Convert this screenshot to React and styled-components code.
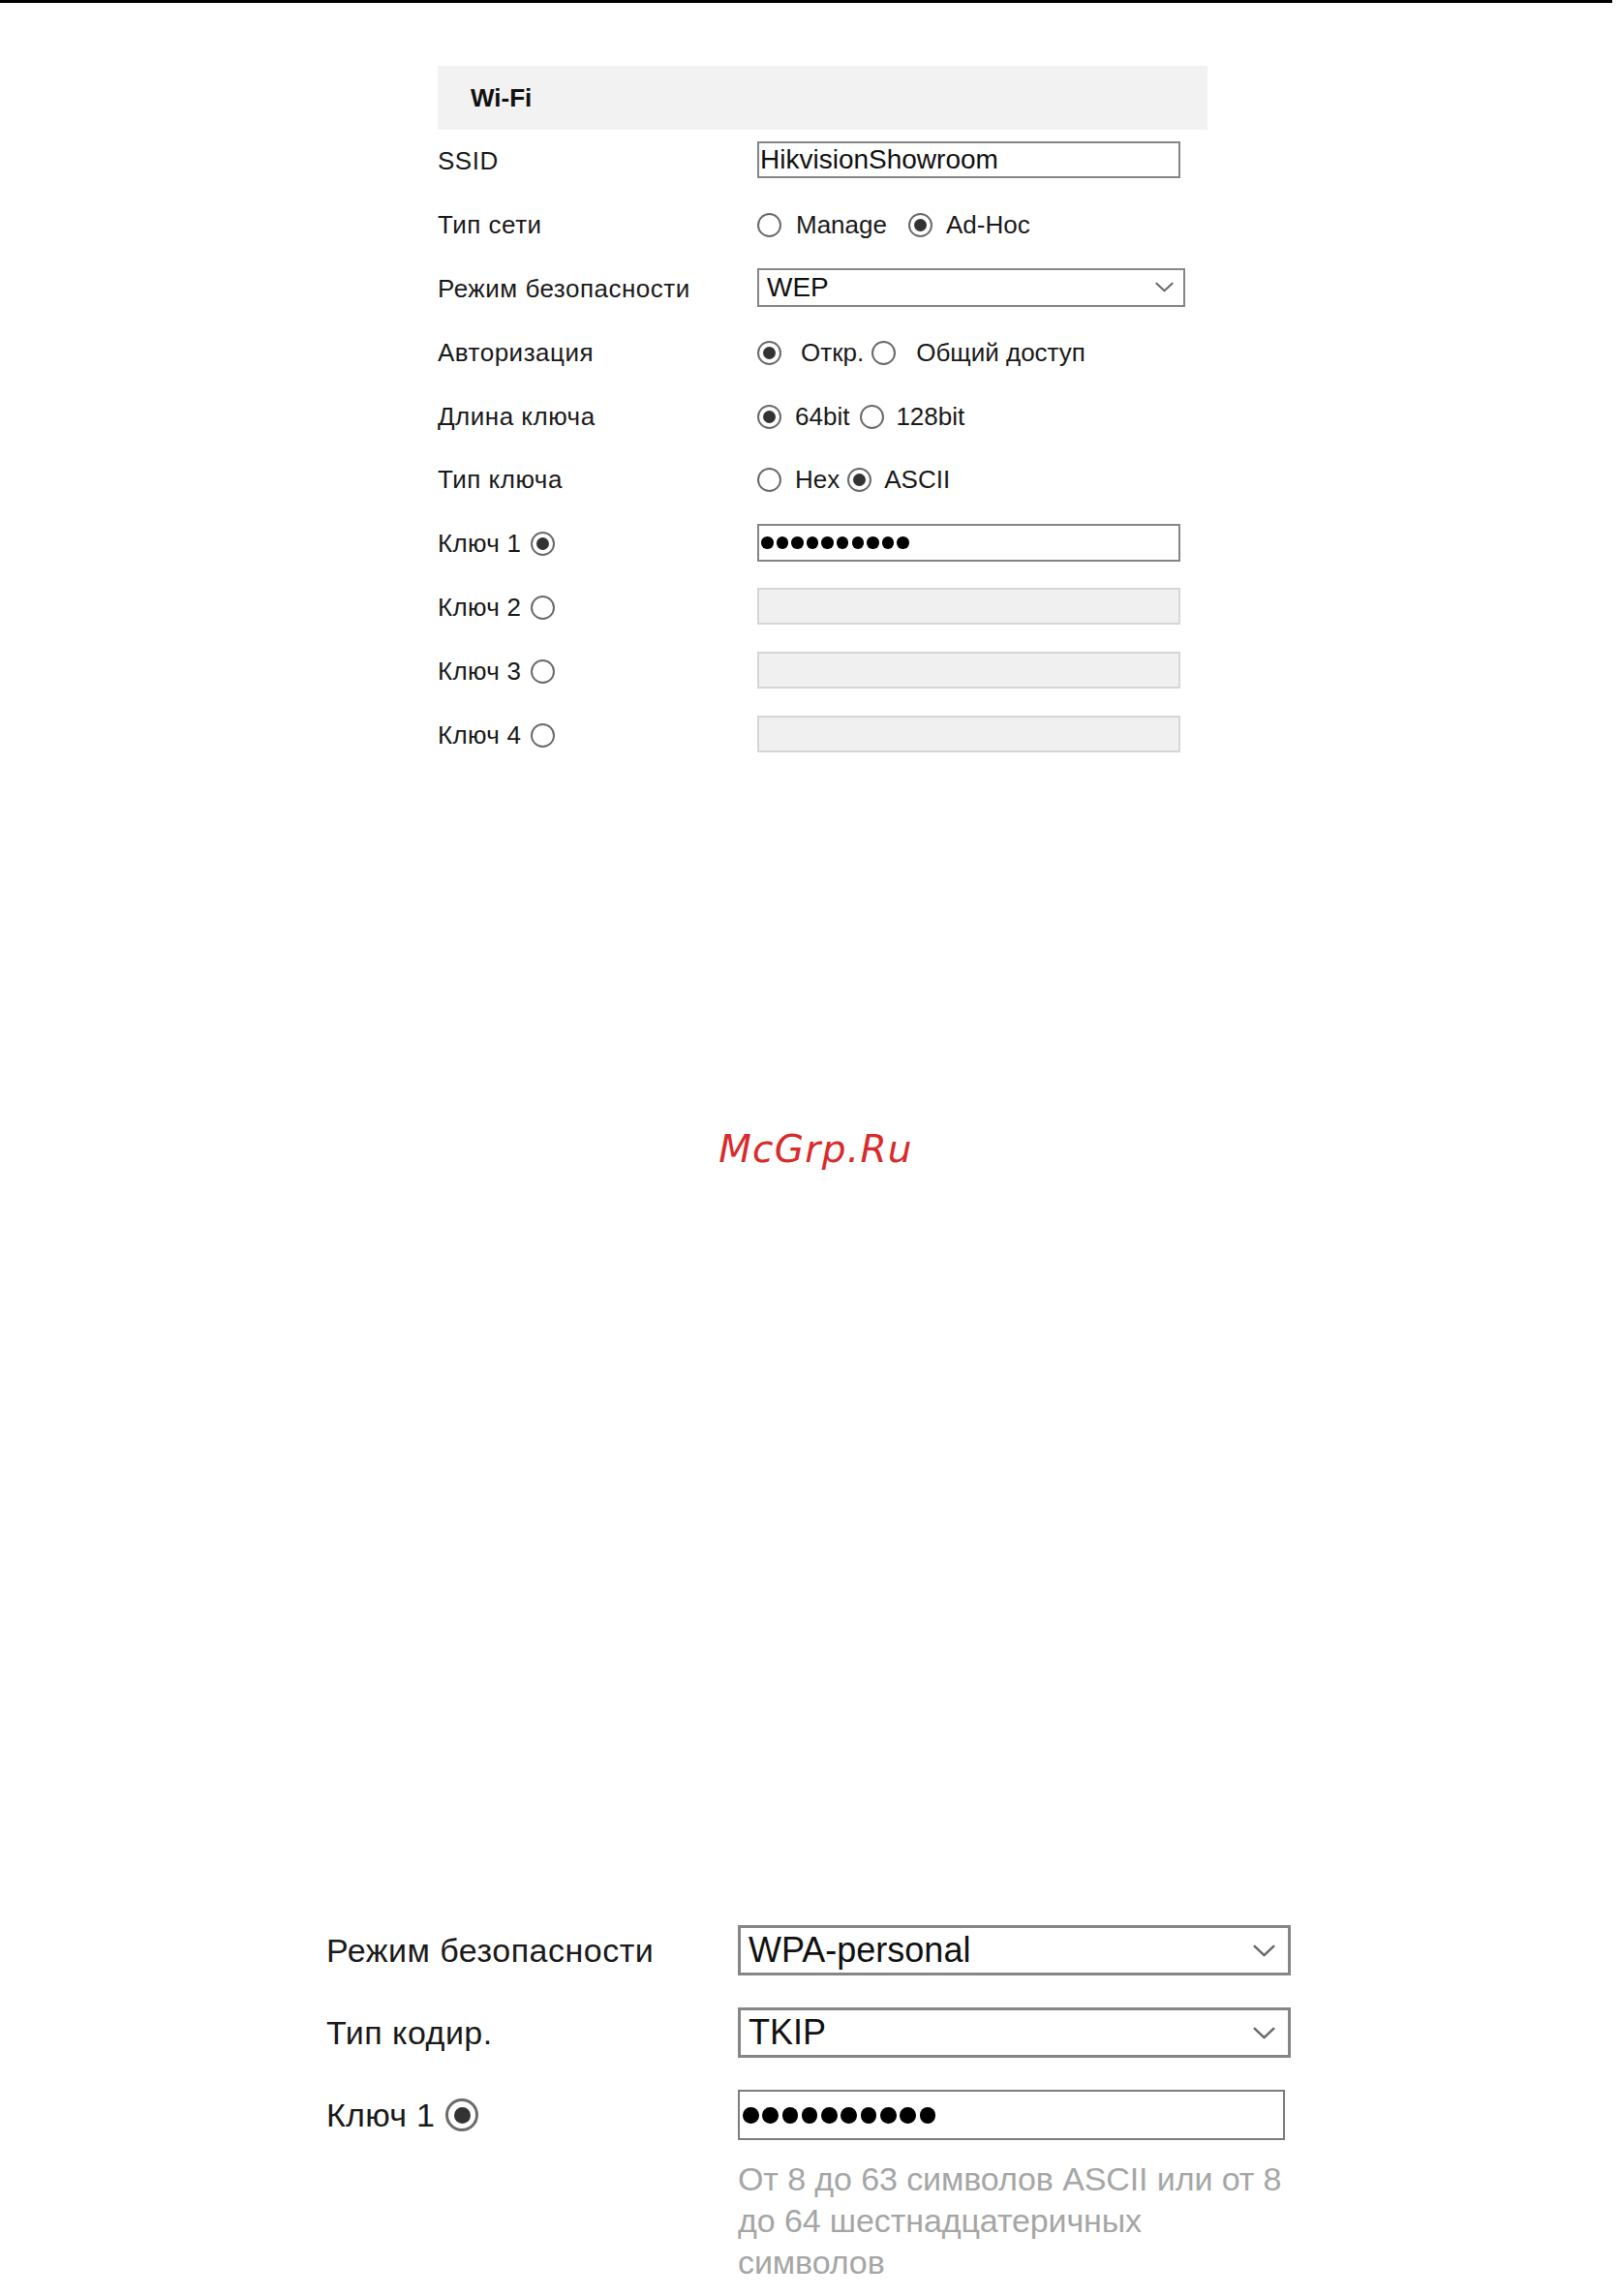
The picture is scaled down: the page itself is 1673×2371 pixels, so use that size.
import React from "react";
import styled, { createGlobalStyle } from "styled-components";

const GlobalStyle = createGlobalStyle`
  html, body { margin: 0; padding: 0; background: #ffffff; }
  body {
    font-family: "Liberation Sans", Arial, sans-serif;
    color: #1a1a1a;
  }
  * { box-sizing: border-box; }
`;

const Page = styled.div`
  width: 1673px;
  min-height: 2371px;
  background: #fff;
`;

const TopRule = styled.div`
  width: 1665px;
  height: 3px;
  background: #000;
`;

const WifiPanel = styled.section`
  margin: 65px 0 0 452px;
  width: 795px;
`;

const PanelHeader = styled.div`
  height: 66px;
  background: #f2f2f2;
  padding-left: 34px;
  display: flex;
  align-items: center;
  font-size: 26px;
  font-weight: bold;
  color: #111;
`;

const FormRow = styled.div`
  display: grid;
  grid-template-columns: ${(p) => p.$labelWidth}px 1fr;
  align-items: center;
  height: ${(p) => p.$h}px;
`;

const Label = styled.div`
  display: flex;
  align-items: center;
  gap: ${(p) => p.$gap || 10}px;
  font-size: ${(p) => p.$size || 26}px;
  letter-spacing: ${(p) => p.$ls ?? 0.5}px;
  color: #1a1a1a;
  white-space: nowrap;
`;

const TextInput = styled.input`
  width: 437px;
  height: 38px;
  margin: 0 0 3px 0;
  border: 2px solid ${(p) => (p.disabled ? "#d6d6d6" : "#858585")};
  background: ${(p) => (p.disabled ? "#f0f0f0" : "#fff")};
  font-family: "Liberation Sans", Arial, sans-serif;
  font-size: 28px;
  color: #111;
  padding: 0 0 0 1px;
  outline: none;
  border-radius: 0;
`;

const PasswordBox = styled.div`
  width: ${(p) => p.$w}px;
  height: ${(p) => p.$h}px;
  margin-bottom: ${(p) => p.$mb || 0}px;
  border: 2px solid ${(p) => p.$border};
  background: #fff;
  display: flex;
  align-items: center;
  gap: ${(p) => p.$gap}px;
  padding-left: ${(p) => p.$pad}px;
`;

const Dot = styled.span`
  width: ${(p) => p.$d}px;
  height: ${(p) => p.$d}px;
  border-radius: 50%;
  background: #000;
  flex: none;
`;

const SelectBox = styled.div`
  width: ${(p) => p.$w}px;
  height: ${(p) => p.$h}px;
  margin-bottom: ${(p) => p.$mb || 0}px;
  border: ${(p) => p.$bw}px solid #868686;
  background: #fff;
  display: flex;
  align-items: center;
  justify-content: space-between;
  padding: 0 ${(p) => p.$pr}px 0 ${(p) => p.$pl}px;
  font-size: ${(p) => p.$size}px;
  color: #111;
`;

const RadioGroup = styled.div`
  display: flex;
  align-items: center;
  font-size: 26px;
  color: #1a1a1a;
  white-space: nowrap;
`;

const Radio = styled.span`
  flex: none;
  width: ${(p) => p.$size || 25}px;
  height: ${(p) => p.$size || 25}px;
  border-radius: 50%;
  border: ${(p) => p.$bw || 2}px solid #6b6b6b;
  background: #fff;
  display: inline-flex;
  align-items: center;
  justify-content: center;
  &::after {
    content: "";
    display: ${(p) => (p.$checked ? "block" : "none")};
    width: ${(p) => p.$dot || 13}px;
    height: ${(p) => p.$dot || 13}px;
    border-radius: 50%;
    background: #333;
  }
`;

const OptionText = styled.span`
  margin-left: ${(p) => p.$ml}px;
  margin-right: ${(p) => p.$mr || 0}px;
`;

const Watermark = styled.div`
  margin-top: 375px;
  padding-left: 12px;
  height: 40px;
  line-height: 40px;
  text-align: center;
  font-family: "DejaVu Sans", sans-serif;
  font-style: oblique;
  font-size: 39px;
  letter-spacing: 1.3px;
  color: #d92b2b;
`;

const WpaPanel = styled.section`
  margin: 765px 0 0 337px;
  width: 1000px;
`;

const HintRow = styled.div`
  display: grid;
  grid-template-columns: 425px 1fr;
  margin-top: 2px;
`;

const Hint = styled.p`
  margin: 0;
  width: 568px;
  font-size: 34px;
  line-height: 43px;
  letter-spacing: -0.1px;
  color: #a6a6a6;
`;

const Chevron = ({ w, h }) => (
  <svg width={w} height={h} viewBox="0 0 20 11" fill="none">
    <polyline
      points="1.5,1.5 10,9.5 18.5,1.5"
      stroke="#6a6a6a"
      strokeWidth="2.2"
      strokeLinecap="round"
      strokeLinejoin="round"
    />
  </svg>
);

const Dots = ({ n, d, gap, w, h, border, pad, mb }) => (
  <PasswordBox $w={w} $h={h} $gap={gap} $border={border} $pad={pad} $mb={mb}>
    {Array.from({ length: n }).map((_, i) => (
      <Dot key={i} $d={d} />
    ))}
  </PasswordBox>
);

const TOP_ROW = 65.8;

const radioRows = [
  {
    label: "Тип сети",
    opts: [
      { t: "Manage", on: false, ml: 15, mr: 22 },
      { t: "Ad-Hoc", on: true, ml: 14 },
    ],
  },
];

const moreRadioRows = [
  {
    label: "Авторизация",
    opts: [
      { t: "Откр.", on: true, ml: 20, mr: 8 },
      { t: "Общий доступ", on: false, ml: 21 },
    ],
  },
  {
    label: "Длина ключа",
    opts: [
      { t: "64bit", on: true, ml: 14, mr: 11 },
      { t: "128bit", on: false, ml: 12 },
    ],
  },
  {
    label: "Тип ключа",
    opts: [
      { t: "Hex", on: false, ml: 14, mr: 8 },
      { t: "ASCII", on: true, ml: 13 },
    ],
  },
];

const RadioRow = ({ label, opts }) => (
  <FormRow $labelWidth={330} $h={TOP_ROW}>
    <Label>{label}</Label>
    <RadioGroup>
      {opts.map((o) => (
        <React.Fragment key={o.t}>
          <Radio $checked={o.on} />
          <OptionText $ml={o.ml} $mr={o.mr}>
            {o.t}
          </OptionText>
        </React.Fragment>
      ))}
    </RadioGroup>
  </FormRow>
);

export default function App() {
  return (
    <Page>
      <GlobalStyle />
      <TopRule />
      <WifiPanel>
        <PanelHeader>Wi-Fi</PanelHeader>
        <FormRow $labelWidth={330} $h={TOP_ROW}>
          <Label>SSID</Label>
          <TextInput readOnly value="HikvisionShowroom" />
        </FormRow>
        {radioRows.map((r) => (
          <RadioRow key={r.label} {...r} />
        ))}
        <FormRow $labelWidth={330} $h={TOP_ROW}>
          <Label>Режим безопасности</Label>
          <SelectBox $w={442} $h={40} $bw={2} $pl={8} $pr={10} $size={28} $mb={3}>
            <span>WEP</span>
            <Chevron w={19} h={11} />
          </SelectBox>
        </FormRow>
        {moreRadioRows.map((r) => (
          <RadioRow key={r.label} {...r} />
        ))}
        <FormRow $labelWidth={330} $h={TOP_ROW}>
          <Label $ls={0.3}>
            Ключ 1<Radio $checked />
          </Label>
          <Dots n={10} d={12.5} gap={3.1} w={437} h={39} border="#858585" pad={2} mb={2} />
        </FormRow>
        {[2, 3, 4].map((k) => (
          <FormRow key={k} $labelWidth={330} $h={TOP_ROW}>
            <Label $ls={0.3}>
              Ключ {k}
              <Radio />
            </Label>
            <TextInput disabled value="" readOnly />
          </FormRow>
        ))}
      </WifiPanel>

      <Watermark>McGrp.Ru</Watermark>

      <WpaPanel>
        <FormRow $labelWidth={425} $h={85}>
          <Label $size={34}>Режим безопасности</Label>
          <SelectBox $w={571} $h={52} $bw={3} $pl={8} $pr={13} $size={36}>
            <span>WPA-personal</span>
            <Chevron w={23} h={13} />
          </SelectBox>
        </FormRow>
        <FormRow $labelWidth={425} $h={85}>
          <Label $size={34}>Тип кодир.</Label>
          <SelectBox $w={571} $h={52} $bw={3} $pl={8} $pr={13} $size={36}>
            <span>TKIP</span>
            <Chevron w={23} h={13} />
          </SelectBox>
        </FormRow>
        <FormRow $labelWidth={425} $h={85}>
          <Label $size={34} $gap={11} $ls={0.3}>
            Ключ 1<Radio $checked $size={34} $bw={3} $dot={17} />
          </Label>
          <Dots n={10} d={16.5} gap={3.8} w={565} h={52} border="#7d7d7d" pad={3} />
        </FormRow>
        <HintRow>
          <span />
          <Hint>От 8 до 63 символов ASCII или от 8 до 64 шестнадцатеричных символов</Hint>
        </HintRow>
      </WpaPanel>
    </Page>
  );
}
